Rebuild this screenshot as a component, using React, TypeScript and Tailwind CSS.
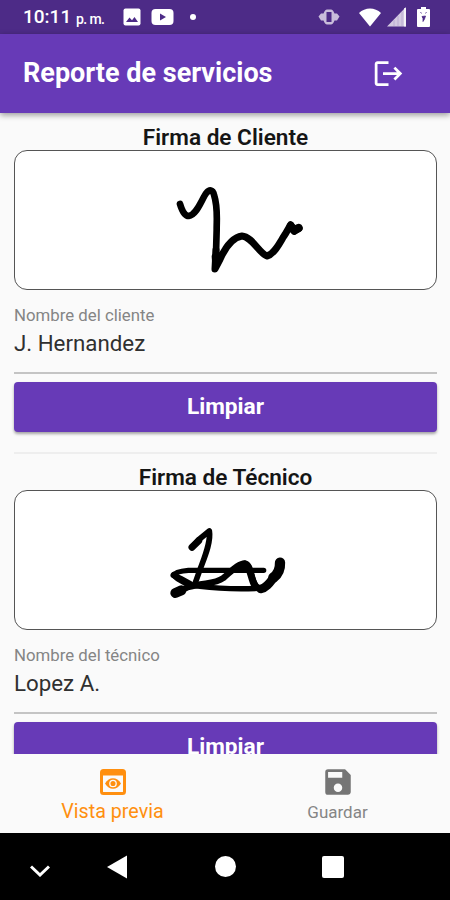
import React from "react";
import { MdSave, MdLogout } from "react-icons/md";

type Signature = {
  title: string;
  label: string;
  name: string;
  strokes: { d: string; width: number }[];
};

const signatures: Signature[] = [
  {
    title: "Firma de Cliente",
    label: "Nombre del cliente",
    name: "J. Hernandez",
    strokes: [
      { d: "M90 102C96 122 104 138 116 138C142 134 156 84 170 68C178 58 188 58 192 74C204 112 200 140 200 180L198 250", width: 20 },
      { d: "M198 240L195 297L210 268C226 232 248 202 276 198C306 200 328 250 351 258C376 252 396 204 406 192L422 164L433 184L447 175", width: 21 },
      { d: "M195 260L197 285L206 258", width: 20 },
      { d: "M422 168L432 181L446 174", width: 25 },
    ],
  },
  {
    title: "Firma de Técnico",
    label: "Nombre del técnico",
    name: "Lopez A.",
    strokes: [
      { d: "M126 112L145 90L178 63C184 98 160 150 148 184L134 224", width: 17 },
      { d: "M126 112L146 92", width: 21 },
      { d: "M341 181H115C92 183 74 188 71 196C84 210 112 228 150 229C205 236 260 238 330 235", width: 16 },
      { d: "M71 195L90 206L120 222", width: 19 },
      { d: "M74 250L112 232C162 216 192 224 220 204C244 184 266 160 284 160C306 164 300 208 318 228C330 244 350 230 366 205", width: 19 },
      { d: "M270 170L284 162C302 170 302 205 314 226", width: 21 },
      { d: "M76 249L94 241", width: 30 },
      { d: "M390 158C391 178 384 192 370 203", width: 31 },
      { d: "M370 204C358 220 348 234 332 237", width: 26 },
    ],
  },
];

function StatusBar() {
  return (
    <header className="flex h-[34px] shrink-0 items-center bg-[#4d2b87] pl-[23px] pr-5 text-white">
      <span className="mt-px w-[49px] whitespace-nowrap text-[19px] font-medium">10:11</span>
      <span className="ml-[4px] mt-1 w-[30px] whitespace-nowrap text-[14px] font-medium tracking-[-0.6px]">p. m.</span>
      <svg className="ml-[17px] h-[18px] w-[18px]" viewBox="0 0 18 18">
        <rect x="0.5" y="0.5" width="17" height="17" rx="2" fill="white" />
        <path d="M3 14L6.500 9.500L9 12.300L11.500 9L15 14Z" fill="#4d2b87" />
      </svg>
      <svg className="ml-[10px] h-4 w-[23px]" viewBox="0 0 23 16">
        <rect x="0.500" width="22" height="16" rx="4" fill="white" />
        <path d="M9 4.500L15 8L9 11.500Z" fill="#4d2b87" />
      </svg>
      <span className="ml-[16px] h-1.5 w-1.5 rounded-full bg-white" />
      <svg className="ml-auto h-4 w-[22px]" viewBox="0 0 22 16" fill="#c9bddb">
        <path d="M0.500 7.500L3 4.500H5.500Q7 0.500 9 0.500H13Q15 0.500 16.500 4.500H19L21.500 7.500L19 11.500H16.500Q15 15.500 13 15.500H9Q7 15.500 5.500 11.500H3Z" />
        <rect x="8.500" y="3" width="5" height="10" fill="#4d2b87" />
      </svg>
      <svg className="ml-[19px] h-[19px] w-[22px]" viewBox="0 0 22 19" fill="white">
        <path d="M0 5C6 -1 16 -1 22 5L11 18.500Z" />
      </svg>
      <svg className="ml-[6px] h-[20px] w-[19px]" viewBox="0 0 19 20">
        <path d="M0 19.500L19 0V19.500Z" fill="#d3c9e1" />
        <path d="M7 13V19M11 9V19M15 5V19" stroke="#b5a5cd" strokeWidth="0.800" />
        <path d="M18 1V19.500" stroke="white" strokeWidth="1.500" />
      </svg>
      <svg className="ml-[11px] h-5 w-[13px]" viewBox="0 0 13 20">
        <path d="M4 0H9V2H12Q13 2 13 3V19Q13 20 12 20H1Q0 20 0 19V3Q0 2 1 2H4Z" fill="white" />
        <path d="M3.500 5L4.500 6.500M9.500 5L8.500 6.500M5 9.500L8.500 9L7.500 12L6 14.500V11.500Z" stroke="#4d2b87" strokeWidth="0.800" fill="#4d2b87" />
      </svg>
    </header>
  );
}

function PreviewIcon() {
  return (
    <svg className="ml-px mt-[4px] h-[27px] w-[27px]" viewBox="0 0 27 27">
      <rect x="1.500" y="1.500" width="23" height="23" rx="2" fill="none" stroke="currentColor" strokeWidth="3" />
      <rect x="1" y="1" width="24" height="5.500" fill="currentColor" />
      <path d="M5 14.500C9 7.500 17 7.500 21 14.500C17 21.500 9 21.500 5 14.500Z" fill="currentColor" />
      <circle cx="13" cy="14.500" r="3.200" fill="none" stroke="#fafafa" strokeWidth="1.300" />
    </svg>
  );
}

function SignatureSection({ signature }: { signature: Signature }) {
  return (
    <section className="flex h-[340px] shrink-0 flex-col">
      <h2 className="h-[26px] pt-px text-center text-[22.600px] font-semibold leading-[26px] text-[#151515]">{signature.title}</h2>
      <div className="h-[140px] rounded-[13px] border border-[#555] bg-white">
        <svg className="h-full w-full" viewBox="-405 -57 1263 414" preserveAspectRatio="xMinYMid meet" fill="none" stroke="black" strokeLinecap="round" strokeLinejoin="round">
          {signature.strokes.map((s) => (
            <path key={s.d} d={s.d} strokeWidth={s.width} />
          ))}
        </svg>
      </div>
      <label className="mt-[15px] text-[16.800px] leading-5 text-[#858585]">{signature.label}</label>
      <p className="mt-[6px] h-[43px] border-b-2 border-[#c4c4c4] text-[22.300px] leading-6 text-[#303030]">{signature.name}</p>
      <button className="mt-2 h-[50px] shrink-0 rounded-[4px] bg-[#673ab7] text-[22.700px] font-bold text-white shadow-[0_2px_3px_rgba(0,0,0,0.35)]">
        Limpiar
      </button>
      <div className="mt-5 border-b-2 border-[#eeeeee]" />
    </section>
  );
}

export default function App() {
  return (
    <div className="flex h-[900px] w-[450px] flex-col overflow-hidden bg-[#fafafa] font-[Roboto,sans-serif]">
      <StatusBar />
      <div className="z-10 flex h-[79px] shrink-0 items-center justify-between bg-[#673ab7] pl-[23px] pr-[45px] text-white shadow-[0_2px_6px_rgba(0,0,0,0.4)]">
        <h1 className="mb-px text-[27px] font-bold">Reporte de servicios</h1>
        <MdLogout size={33} />
      </div>

      <main className="flex min-h-0 flex-1 flex-col overflow-hidden pl-[14px] pr-[13px] pt-[11px]">
        {signatures.map((s) => (
          <SignatureSection key={s.title} signature={s} />
        ))}
      </main>

      <nav className="flex h-[79px] shrink-0 bg-[#fafafa]">
        <div className="flex flex-1 flex-col items-center pt-[11px] text-[#ff8f0f]">
          <PreviewIcon />
          <span className="mt-[4px] text-[19.700px] leading-6">Vista previa</span>
        </div>
        <div className="flex flex-1 flex-col items-center pt-[11px] text-[#757575]">
          <MdSave size={34} />
          <span className="mt-px text-[17px] leading-6 text-[#858585]">Guardar</span>
        </div>
      </nav>

      <div className="flex h-[67px] shrink-0 items-center bg-black pl-[30px] text-white">
        <svg className="mt-2 h-3 w-5" viewBox="0 0 20 12" fill="none" stroke="white" strokeWidth="3">
          <path d="M1 1.500L10 10L19 1.500" />
        </svg>
        <svg className="ml-[57px] h-6 w-5" viewBox="0 0 20 24" fill="white">
          <path d="M0 12L20 0.500V23.500Z" />
        </svg>
        <span className="ml-[88px] h-[21px] w-[21px] rounded-full bg-white" />
        <span className="ml-[86px] h-[22px] w-[22px] rounded-[2px] bg-white" />
      </div>
    </div>
  );
}
